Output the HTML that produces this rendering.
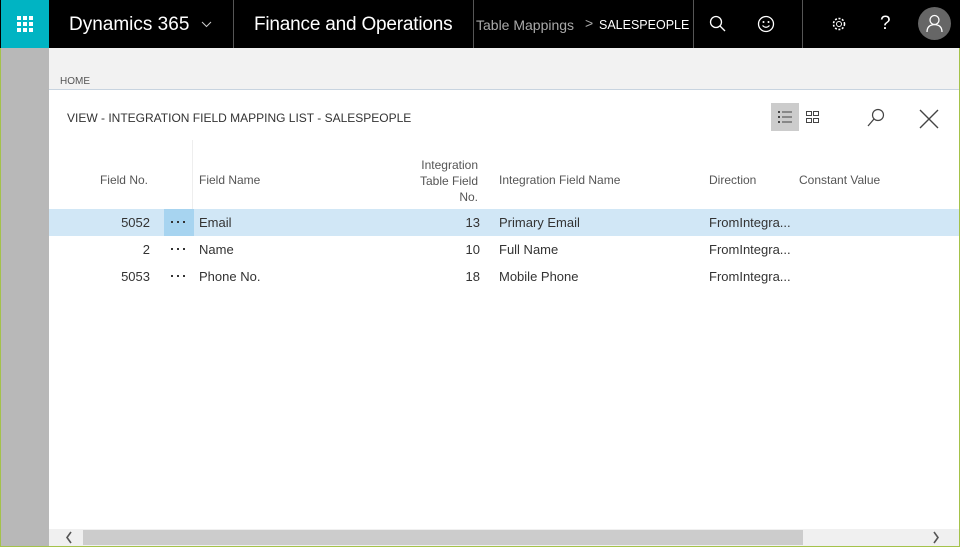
<!DOCTYPE html>
<html><head><meta charset="utf-8"><style>
*{margin:0;padding:0;box-sizing:border-box}
body{width:960px;height:547px;overflow:hidden;position:relative;background:#fff;font-family:"Liberation Sans",sans-serif;color:#333}
.a{position:absolute;white-space:nowrap}
.top{left:0;top:0;width:960px;height:48px;background:#000}
.t{color:#fff}
.h{font-size:12px;color:#555}
.c{font-size:13px;color:#333}
.r{text-align:right}
</style></head><body>
<div class="a" style="left:0;top:0;width:960px;height:547px;border:1px solid #a4c24a"></div>
<div class="a top"></div>
<div class="a" style="left:1px;top:0;width:48px;height:48px;background:#00b4c3"></div>
<svg class="a" style="left:17px;top:16px" width="16" height="16"><g fill="#fff">
<rect x="0" y="0" width="4" height="4"/><rect x="6" y="0" width="4" height="4"/><rect x="12" y="0" width="4" height="4"/>
<rect x="0" y="6" width="4" height="4"/><rect x="6" y="6" width="4" height="4"/><rect x="12" y="6" width="4" height="4"/>
<rect x="0" y="12" width="4" height="4"/><rect x="6" y="12" width="4" height="4"/><rect x="12" y="12" width="4" height="4"/></g></svg>
<div class="a t" style="left:69px;top:14px;font-size:19px">Dynamics 365</div>
<svg class="a" style="left:201px;top:21px" width="11" height="7"><path d="M1 1l4.5 4.5L10 1" stroke="#ccc" fill="none"/></svg>
<div class="a" style="left:233px;top:0;width:1px;height:48px;background:#555"></div>
<div class="a t" style="left:254px;top:14px;font-size:19px;letter-spacing:-0.2px">Finance and Operations</div>
<div class="a" style="left:473px;top:0;width:1px;height:48px;background:#555"></div>
<div class="a" style="left:476px;top:17px;font-size:14px;color:#aaa">Table Mappings</div>
<div class="a" style="left:585px;top:15px;font-size:14px;color:#aaa">&gt;</div>
<div class="a t" style="left:599px;top:18px;font-size:12.5px">SALESPEOPLE</div>
<div class="a" style="left:693px;top:0;width:1px;height:48px;background:#555"></div>
<svg class="a" style="left:709px;top:15px" width="18" height="18"><circle cx="7" cy="7" r="5.5" stroke="#fff" stroke-width="1.3" fill="none"/><path d="M11 11l5 5" stroke="#fff" stroke-width="1.3"/></svg>
<svg class="a" style="left:757px;top:15px" width="18" height="18"><circle cx="9" cy="9" r="7.5" stroke="#fff" stroke-width="1.3" fill="none"/><circle cx="6.5" cy="7" r="1" fill="#fff"/><circle cx="11.5" cy="7" r="1" fill="#fff"/><path d="M5.5 10.5q3.5 3.5 7 0" stroke="#fff" stroke-width="1.2" fill="none"/></svg>
<div class="a" style="left:802px;top:0;width:1px;height:48px;background:#555"></div>
<svg class="a" style="left:831px;top:16px" width="16" height="16"><circle cx="8" cy="8" r="2.5" stroke="#fff" fill="none"/><circle cx="8" cy="8" r="5.5" stroke="#fff" stroke-width="1.6" stroke-dasharray="2 1.6" fill="none"/></svg>
<div class="a t" style="left:880px;top:13px;font-size:19px">?</div>
<div class="a" style="left:918px;top:7px;width:33px;height:33px;border-radius:50%;background:#666"></div>
<svg class="a" style="left:924px;top:13px" width="21" height="21"><circle cx="10.5" cy="7" r="4.5" stroke="#fff" stroke-width="1.3" fill="none"/><path d="M3 19q0-7 7.5-7.5q7.5.5 7.5 7.5" stroke="#fff" stroke-width="1.3" fill="none"/></svg>
<div class="a" style="left:1px;top:48px;width:48px;height:498px;background:#b8b8b8"></div>
<div class="a" style="left:49px;top:48px;width:910px;height:42px;background:#f2f2f2;border-bottom:1px solid #c8d4e0"></div>
<div class="a" style="left:60px;top:76px;font-size:10px;color:#555">HOME</div>
<div class="a" style="left:67px;top:111px;font-size:12px;color:#333">VIEW - INTEGRATION FIELD MAPPING LIST - SALESPEOPLE</div>
<div class="a" style="left:771px;top:103px;width:28px;height:28px;background:#ccc"></div>
<svg class="a" style="left:778px;top:110px" width="15" height="14"><g fill="#444"><rect x="0" y="1" width="2" height="2"/><rect x="0" y="6" width="2" height="2"/><rect x="0" y="11" width="2" height="2"/><rect x="4" y="1.5" width="10" height="1"/><rect x="4" y="6.5" width="10" height="1"/><rect x="4" y="11.5" width="10" height="1"/></g></svg>
<svg class="a" style="left:805px;top:110px" width="16" height="14"><g stroke="#444" fill="none"><rect x="1.5" y="1.5" width="5" height="4"/><rect x="8.5" y="1.5" width="5" height="4"/><rect x="1.5" y="8.5" width="5" height="4"/><rect x="8.5" y="8.5" width="5" height="4"/></g></svg>
<svg class="a" style="left:866px;top:108px" width="20" height="20"><circle cx="12" cy="7" r="5.5" stroke="#444" stroke-width="1.2" fill="none"/><path d="M8 11l-6 7" stroke="#444" stroke-width="1.3"/></svg>
<svg class="a" style="left:919px;top:109px" width="20" height="20"><path d="M1 1l18 18M19 1L1 19" stroke="#444" stroke-width="1.4"/></svg>
<div class="a" style="left:192px;top:140px;width:1px;height:69px;background:#eee"></div>
<div class="a h r" style="left:60px;top:173px;width:88px">Field No.</div>
<div class="a h" style="left:199px;top:173px">Field Name</div>
<div class="a h r" style="left:378px;top:157px;width:100px;line-height:16px;white-space:normal">Integration<br>Table Field<br>No.</div>
<div class="a h" style="left:499px;top:173px">Integration Field Name</div>
<div class="a h" style="left:709px;top:173px">Direction</div>
<div class="a h" style="left:799px;top:173px">Constant Value</div>
<div class="a" style="left:49px;top:209px;width:910px;height:27px;background:#d1e7f6"></div>
<div class="a" style="left:164px;top:209px;width:30px;height:27px;background:#a7d4f0"></div>
<svg class="a" style="left:170px;top:221px" width="18" height="3"><g fill="#333"><rect x="1" y="0" width="2" height="2"/><rect x="7" y="0" width="2" height="2"/><rect x="13" y="0" width="2" height="2"/></g></svg>
<svg class="a" style="left:170px;top:248px" width="18" height="3"><g fill="#333"><rect x="1" y="0" width="2" height="2"/><rect x="7" y="0" width="2" height="2"/><rect x="13" y="0" width="2" height="2"/></g></svg>
<svg class="a" style="left:170px;top:275px" width="18" height="3"><g fill="#333"><rect x="1" y="0" width="2" height="2"/><rect x="7" y="0" width="2" height="2"/><rect x="13" y="0" width="2" height="2"/></g></svg>
<div class="a c r" style="left:60px;top:215px;width:90px">5052</div>
<div class="a c" style="left:199px;top:215px">Email</div>
<div class="a c r" style="left:400px;top:215px;width:80px">13</div>
<div class="a c" style="left:499px;top:215px">Primary Email</div>
<div class="a c" style="left:709px;top:215px">FromIntegra...</div>
<div class="a c r" style="left:60px;top:242px;width:90px">2</div>
<div class="a c" style="left:199px;top:242px">Name</div>
<div class="a c r" style="left:400px;top:242px;width:80px">10</div>
<div class="a c" style="left:499px;top:242px">Full Name</div>
<div class="a c" style="left:709px;top:242px">FromIntegra...</div>
<div class="a c r" style="left:60px;top:269px;width:90px">5053</div>
<div class="a c" style="left:199px;top:269px">Phone No.</div>
<div class="a c r" style="left:400px;top:269px;width:80px">18</div>
<div class="a c" style="left:499px;top:269px">Mobile Phone</div>
<div class="a c" style="left:709px;top:269px">FromIntegra...</div>
<div class="a" style="left:49px;top:529px;width:910px;height:17px;background:#f0f0f0"></div>
<div class="a" style="left:83px;top:530px;width:720px;height:15px;background:#ccc"></div>
<svg class="a" style="left:64px;top:531px" width="10" height="13"><path d="M7 1L3 6.5 7 12" stroke="#555" stroke-width="1.6" fill="none"/></svg>
<svg class="a" style="left:931px;top:531px" width="10" height="13"><path d="M3 1l4 5.5L3 12" stroke="#555" stroke-width="1.6" fill="none"/></svg>
</body></html>
